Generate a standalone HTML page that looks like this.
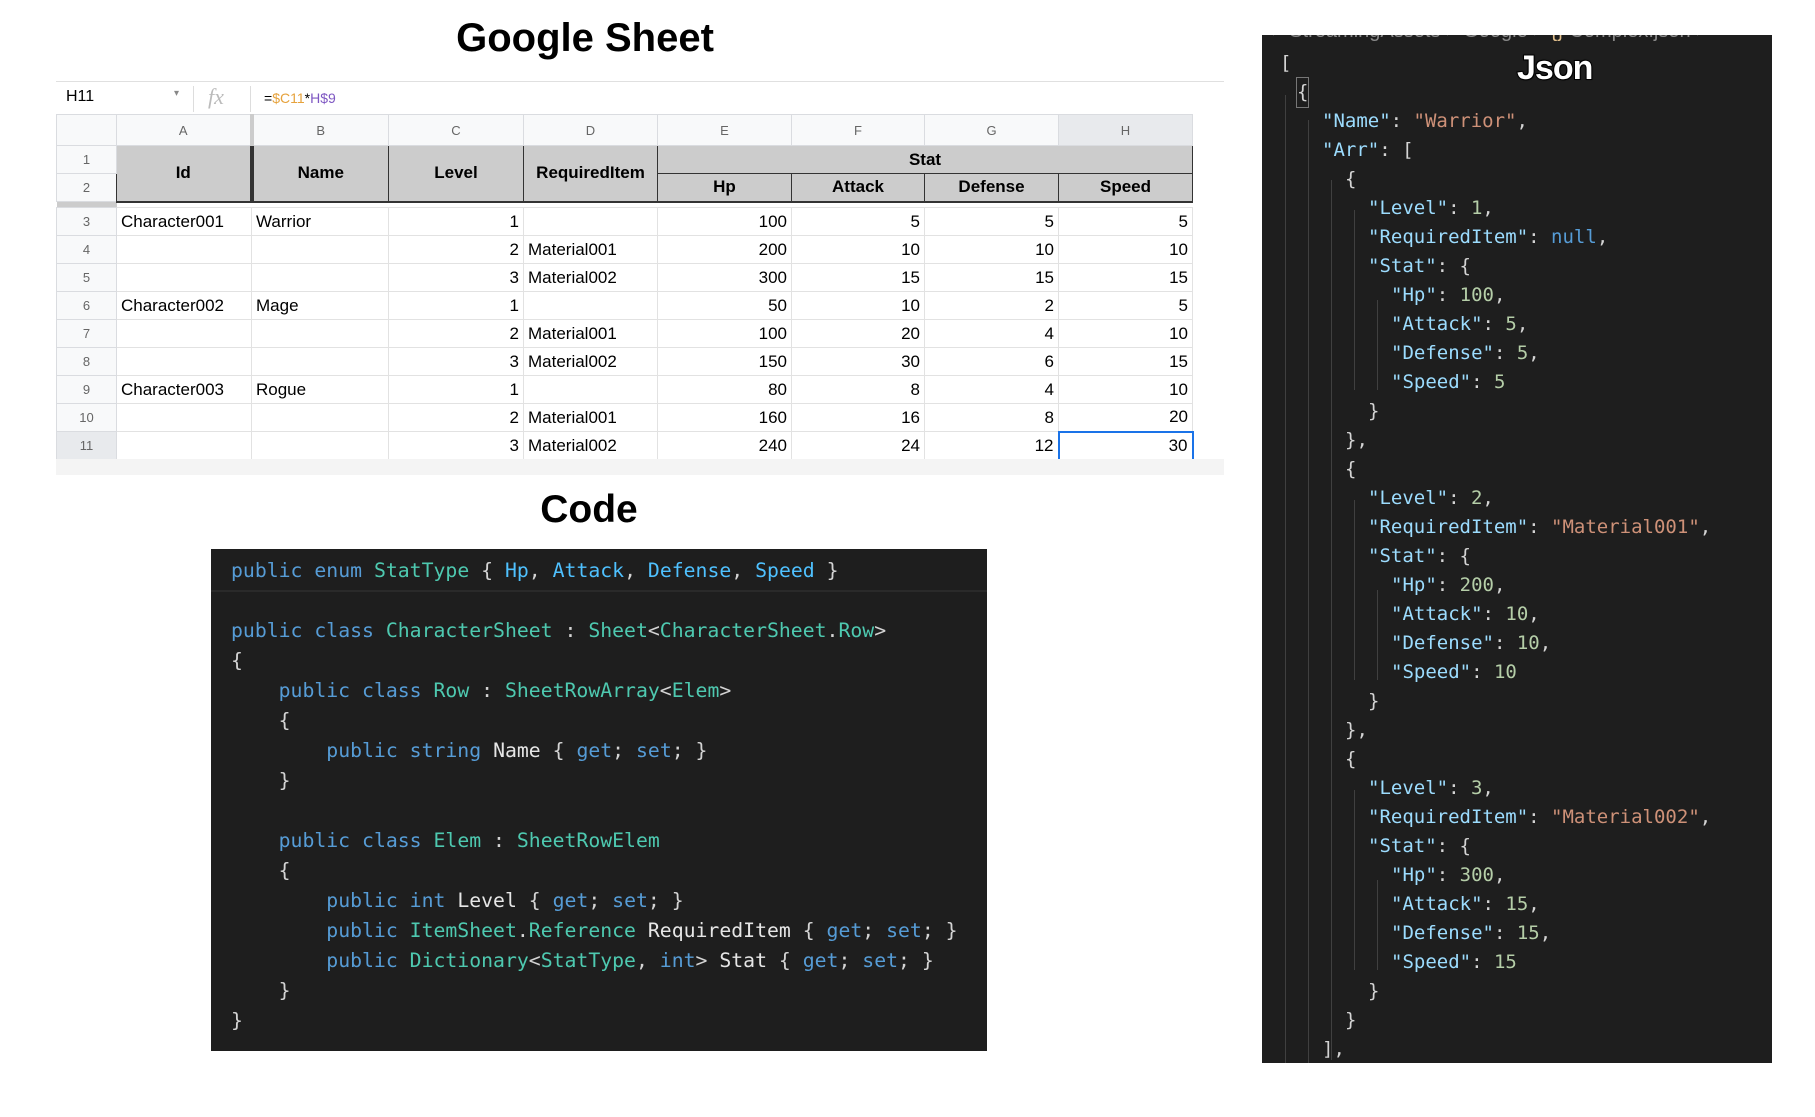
<!DOCTYPE html>
<html><head><meta charset="utf-8">
<style>
*{margin:0;padding:0;box-sizing:border-box}
body{width:1815px;height:1117px;background:#fff;position:relative;overflow:hidden;font-family:"Liberation Sans",sans-serif}
.title{position:absolute;font-weight:bold;color:#000;font-size:40px;transform:translateX(-50%);white-space:nowrap}
.fbar{position:absolute;left:56px;top:81px;width:1168px;height:33px;border-top:1px solid #e0e0e0;font-size:16px}
table{position:absolute;left:56px;top:114px;border-collapse:collapse;font-size:17px;table-layout:fixed}
td{border:1px solid #e2e2e2;padding:0 4px;white-space:nowrap;overflow:hidden;color:#000}
.ch td{background:#f8f9fa;color:#666;font-size:13px;text-align:center;height:31px;border-color:#dadce0}
.rn{background:#f8f9fa !important;color:#666 !important;font-size:13px !important;text-align:center;border-color:#dadce0 !important;font-weight:normal !important}
.h{background:#cccccc;font-weight:bold;text-align:center;border:1px solid #333}
.r td{height:28px}
.n{text-align:right}
.code{position:absolute;left:211px;top:549px;width:776px;height:502px;background:#1e1e1e;font-family:"DejaVu Sans Mono","Liberation Mono",monospace;font-size:19.8px;color:#d4d4d4}
.code div{position:absolute;left:20px;white-space:pre;line-height:30px}
.k{color:#569cd6}.t{color:#4ec9b0}.e{color:#4fc1ff}.p{color:#9cdcfe}.w{color:#e6e6e6}
.json{position:absolute;left:1262px;top:35px;width:510px;height:1028px;background:#1e1e1e;font-family:"DejaVu Sans Mono","Liberation Mono",monospace;font-size:19px;color:#d4d4d4;overflow:hidden}
.json div.l{position:absolute;white-space:pre;line-height:29px}
.jk{color:#9cdcfe}.js{color:#ce9178}.jn{color:#b5cea8}.jl{color:#569cd6}
.g{position:absolute;width:1px;background:#404040}
</style></head><body>
<div class="title" style="left:585px;top:16px">Google Sheet</div>
<div class="fbar">
<span style="position:absolute;left:10px;top:6px;color:#000">H11</span>
<span style="position:absolute;left:118px;top:6px;color:#888;font-size:10px">▾</span>
<span style="position:absolute;left:137px;top:4px;height:26px;border-left:1px solid #ddd"></span>
<span style="position:absolute;left:152px;top:2px;color:#bbb;font-style:italic;font-family:'Liberation Serif',serif;font-size:22px">fx</span>
<span style="position:absolute;left:194px;top:4px;height:26px;border-left:1px solid #ddd"></span>
<span style="position:absolute;left:208px;top:8px;font-size:14px">=<span style="color:#e6a23c">$C11</span>*<span style="color:#7e57c2">H$9</span></span>
</div>
<table>
<colgroup><col style="width:60px"><col style="width:135px"><col style="width:137px"><col style="width:135px"><col style="width:134px"><col style="width:134px"><col style="width:133px"><col style="width:134px"><col style="width:134px"></colgroup>
<tr class="ch"><td></td><td style="border-right:4px solid #ccc">A</td><td>B</td><td>C</td><td>D</td><td>E</td><td>F</td><td>G</td><td style="background:#e8eaed">H</td></tr>
<tr style="height:28px"><td class="rn">1</td><td class="h" rowspan="2" style="border-right:4px solid #333">Id</td><td class="h" rowspan="2">Name</td><td class="h" rowspan="2">Level</td><td class="h" rowspan="2">RequiredItem</td><td class="h" colspan="4">Stat</td></tr>
<tr style="height:28px"><td class="rn">2</td><td class="h">Hp</td><td class="h">Attack</td><td class="h">Defense</td><td class="h">Speed</td></tr>
<tr style="height:6px"><td style="background:#ccc;padding:0;border:none"></td><td colspan="8" style="padding:0;border:none;border-top:2px solid #333"></td></tr>
<tr class="r"><td class="rn">3</td><td>Character001</td><td>Warrior</td><td class="n">1</td><td></td><td class="n">100</td><td class="n">5</td><td class="n">5</td><td class="n">5</td></tr>
<tr class="r"><td class="rn">4</td><td></td><td></td><td class="n">2</td><td>Material001</td><td class="n">200</td><td class="n">10</td><td class="n">10</td><td class="n">10</td></tr>
<tr class="r"><td class="rn">5</td><td></td><td></td><td class="n">3</td><td>Material002</td><td class="n">300</td><td class="n">15</td><td class="n">15</td><td class="n">15</td></tr>
<tr class="r"><td class="rn">6</td><td>Character002</td><td>Mage</td><td class="n">1</td><td></td><td class="n">50</td><td class="n">10</td><td class="n">2</td><td class="n">5</td></tr>
<tr class="r"><td class="rn">7</td><td></td><td></td><td class="n">2</td><td>Material001</td><td class="n">100</td><td class="n">20</td><td class="n">4</td><td class="n">10</td></tr>
<tr class="r"><td class="rn">8</td><td></td><td></td><td class="n">3</td><td>Material002</td><td class="n">150</td><td class="n">30</td><td class="n">6</td><td class="n">15</td></tr>
<tr class="r"><td class="rn">9</td><td>Character003</td><td>Rogue</td><td class="n">1</td><td></td><td class="n">80</td><td class="n">8</td><td class="n">4</td><td class="n">10</td></tr>
<tr class="r"><td class="rn">10</td><td></td><td></td><td class="n">2</td><td>Material001</td><td class="n">160</td><td class="n">16</td><td class="n">8</td><td class="n">20</td></tr>
<tr class="r"><td class="rn" style="background:#e8eaed !important">11</td><td></td><td></td><td class="n">3</td><td>Material002</td><td class="n">240</td><td class="n">24</td><td class="n">12</td><td class="n" style="border:2px solid #1a73e8">30</td></tr>
</table>
<div style="position:absolute;left:56px;top:459px;width:1168px;height:16px;background:#f4f4f4"></div>

<div class="title" style="left:589px;top:488px;font-size:39px">Code</div>
<div class="code">
<div style="top:7px"><span class="k">public</span> <span class="k">enum</span> <span class="t">StatType</span> { <span class="e">Hp</span>, <span class="e">Attack</span>, <span class="e">Defense</span>, <span class="e">Speed</span> }</div>
<div style="left:0;top:41px;width:776px;height:2px;background:#2a2a2a"></div>
<div style="top:67px"><span class="k">public</span> <span class="k">class</span> <span class="t">CharacterSheet</span> : <span class="t">Sheet</span>&lt;<span class="t">CharacterSheet</span>.<span class="t">Row</span>&gt;</div>
<div style="top:97px">{</div>
<div style="top:127px">    <span class="k">public</span> <span class="k">class</span> <span class="t">Row</span> : <span class="t">SheetRowArray</span>&lt;<span class="t">Elem</span>&gt;</div>
<div style="top:157px">    {</div>
<div style="top:187px">        <span class="k">public</span> <span class="k">string</span> <span class="w">Name</span> { <span class="k">get</span>; <span class="k">set</span>; }</div>
<div style="top:217px">    }</div>
<div style="top:277px">    <span class="k">public</span> <span class="k">class</span> <span class="t">Elem</span> : <span class="t">SheetRowElem</span></div>
<div style="top:307px">    {</div>
<div style="top:337px">        <span class="k">public</span> <span class="k">int</span> <span class="w">Level</span> { <span class="k">get</span>; <span class="k">set</span>; }</div>
<div style="top:367px">        <span class="k">public</span> <span class="t">ItemSheet</span>.<span class="t">Reference</span> <span class="w">RequiredItem</span> { <span class="k">get</span>; <span class="k">set</span>; }</div>
<div style="top:397px">        <span class="k">public</span> <span class="t">Dictionary</span>&lt;<span class="t">StatType</span>, <span class="k">int</span>&gt; <span class="w">Stat</span> { <span class="k">get</span>; <span class="k">set</span>; }</div>
<div style="top:427px">    }</div>
<div style="top:457px">}</div>
</div>

<div class="json">
<div class="l" style="left:10px;top:-18px;color:#888;font-family:'Liberation Sans',sans-serif;font-size:20px">&gt; StreamingAssets &gt; Google &gt; <span style="color:#e2c08d">{}</span> Complex.json &gt;</div>
<div class="g" style="left:23px;top:60px;height:968px"></div>
<div class="g" style="left:46px;top:85px;height:943px"></div>
<div class="g" style="left:69px;top:145px;height:880px"></div>
<div class="g" style="left:92px;top:175px;height:180px"></div>
<div class="g" style="left:115px;top:265px;height:90px"></div>
<div class="g" style="left:92px;top:465px;height:180px"></div>
<div class="g" style="left:115px;top:555px;height:90px"></div>
<div class="g" style="left:92px;top:755px;height:180px"></div>
<div class="g" style="left:115px;top:845px;height:90px"></div>
<div class="l" style="left:18px;top:14px">[</div>
<div class="l" style="left:35px;top:43px;outline:1px solid #777">{</div>
<div style="position:absolute;left:255px;top:14px;font-family:'Liberation Sans',sans-serif;font-weight:bold;font-size:34px;letter-spacing:-1px;color:#fff;-webkit-text-stroke:2px #000;paint-order:stroke fill;text-shadow:0 0 2px #000,1px 1px 0 #000,-1px -1px 0 #000">Json</div>
<div class="l" style="left:60px;top:72px"><span class="jk">"Name"</span>: <span class="js">"Warrior"</span>,</div>
<div class="l" style="left:60px;top:101px"><span class="jk">"Arr"</span>: [</div>
<div class="l" style="left:83px;top:130px">{</div>
<div class="l" style="left:106px;top:159px"><span class="jk">"Level"</span>: <span class="jn">1</span>,</div>
<div class="l" style="left:106px;top:188px"><span class="jk">"RequiredItem"</span>: <span class="jl">null</span>,</div>
<div class="l" style="left:106px;top:217px"><span class="jk">"Stat"</span>: {</div>
<div class="l" style="left:129px;top:246px"><span class="jk">"Hp"</span>: <span class="jn">100</span>,</div>
<div class="l" style="left:129px;top:275px"><span class="jk">"Attack"</span>: <span class="jn">5</span>,</div>
<div class="l" style="left:129px;top:304px"><span class="jk">"Defense"</span>: <span class="jn">5</span>,</div>
<div class="l" style="left:129px;top:333px"><span class="jk">"Speed"</span>: <span class="jn">5</span></div>
<div class="l" style="left:106px;top:362px">}</div>
<div class="l" style="left:83px;top:391px">},</div>
<div class="l" style="left:83px;top:420px">{</div>
<div class="l" style="left:106px;top:449px"><span class="jk">"Level"</span>: <span class="jn">2</span>,</div>
<div class="l" style="left:106px;top:478px"><span class="jk">"RequiredItem"</span>: <span class="js">"Material001"</span>,</div>
<div class="l" style="left:106px;top:507px"><span class="jk">"Stat"</span>: {</div>
<div class="l" style="left:129px;top:536px"><span class="jk">"Hp"</span>: <span class="jn">200</span>,</div>
<div class="l" style="left:129px;top:565px"><span class="jk">"Attack"</span>: <span class="jn">10</span>,</div>
<div class="l" style="left:129px;top:594px"><span class="jk">"Defense"</span>: <span class="jn">10</span>,</div>
<div class="l" style="left:129px;top:623px"><span class="jk">"Speed"</span>: <span class="jn">10</span></div>
<div class="l" style="left:106px;top:652px">}</div>
<div class="l" style="left:83px;top:681px">},</div>
<div class="l" style="left:83px;top:710px">{</div>
<div class="l" style="left:106px;top:739px"><span class="jk">"Level"</span>: <span class="jn">3</span>,</div>
<div class="l" style="left:106px;top:768px"><span class="jk">"RequiredItem"</span>: <span class="js">"Material002"</span>,</div>
<div class="l" style="left:106px;top:797px"><span class="jk">"Stat"</span>: {</div>
<div class="l" style="left:129px;top:826px"><span class="jk">"Hp"</span>: <span class="jn">300</span>,</div>
<div class="l" style="left:129px;top:855px"><span class="jk">"Attack"</span>: <span class="jn">15</span>,</div>
<div class="l" style="left:129px;top:884px"><span class="jk">"Defense"</span>: <span class="jn">15</span>,</div>
<div class="l" style="left:129px;top:913px"><span class="jk">"Speed"</span>: <span class="jn">15</span></div>
<div class="l" style="left:106px;top:942px">}</div>
<div class="l" style="left:83px;top:971px">}</div>
<div class="l" style="left:60px;top:1000px">],</div>
</div>
</body></html>
